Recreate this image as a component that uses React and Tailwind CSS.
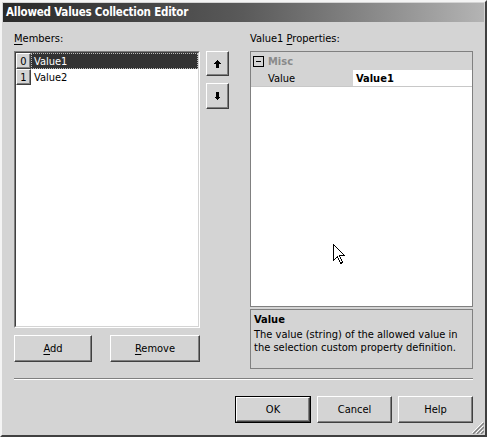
import React from "react"

const raised =
  "bg-[#d4d4d4] border border-t-white border-l-white border-r-[#404040] border-b-[#404040] shadow-[inset_-1px_-1px_0_#808080]"

function Btn({ children, className = "", def = false }) {
  if (def) {
    return (
      <div className={`border border-black ${className}`}>
        <div className={`${raised} w-full h-full flex items-center justify-center`}>{children}</div>
      </div>
    )
  }
  return <div className={`${raised} flex items-center justify-center ${className}`}>{children}</div>
}

function Arrow({ down = false }) {
  return (
    <svg width="7" height="8" viewBox="0 0 7 8" className={down ? "rotate-180" : ""}>
      <polygon points="3.5,0 7,3.5 5,3.5 5,8 2,8 2,3.5 0,3.5" fill="black" shapeRendering="crispEdges" />
    </svg>
  )
}

export default function App() {
  const font = "font-['DejaVu_Sans_Condensed','DejaVu_Sans',sans-serif] text-[11px] leading-[13px] text-black"
  return (
    <div className={`relative w-[487px] h-[437px] bg-[#d4d4d4] border-2 border-t-[#f4f4f4] border-l-[#f4f4f4] border-r-[#404040] border-b-[#404040] ${font}`}>
      {/* title bar */}
      <div className="mx-[1px] mt-[1px] h-[19px] bg-gradient-to-r from-[#2a2a2a] via-[#5a5a5a] to-[#b4b4b4] flex items-center pl-[3px]">
        <span className="text-white font-bold text-[11.5px] tracking-[-0.2px]">Allowed Values Collection Editor</span>
      </div>

      <div className="flex items-start pl-[12px]">
        {/* left column */}
        <div className="w-[186px]">
          <div className="h-[29px] pt-[10px]">
            <span className="underline underline-offset-2">M</span>embers:
          </div>
          <div className="h-[277px] bg-white border border-t-[#808080] border-l-[#808080] border-r-white border-b-white">
            <div className="h-full border border-t-[#404040] border-l-[#404040] border-r-[#d4d4d4] border-b-[#d4d4d4]">
              <div className="flex h-[16px]">
                <div className={`${raised} w-[15px] h-[16px] flex items-center justify-center`}>0</div>
                <div className="flex-1 bg-[#333333] text-white pl-[2px] flex items-center border border-dotted border-[#bbbbbb]">Value1</div>
              </div>
              <div className="flex h-[16px]">
                <div className={`${raised} w-[15px] h-[16px] flex items-center justify-center`}>1</div>
                <div className="flex-1 pl-[3px] flex items-center">Value2</div>
              </div>
            </div>
          </div>
          <div className="flex mt-[7px] gap-[18px]">
            <Btn className="w-[78px] h-[27px]">
              <span><span className="underline underline-offset-2">A</span>dd</span>
            </Btn>
            <Btn className="w-[90px] h-[27px]">
              <span><span className="underline underline-offset-2">R</span>emove</span>
            </Btn>
          </div>
        </div>

        {/* arrow buttons */}
        <div className="ml-[6px] w-[23px] pt-[29px] flex flex-col gap-[7px]">
          <Btn className="h-[25px]"><Arrow /></Btn>
          <Btn className="h-[26px]"><Arrow down /></Btn>
        </div>

        {/* right column */}
        <div className="ml-[21px] w-[223px]">
          <div className="h-[29px] pt-[10px]">
            Value1 <span className="underline underline-offset-2">P</span>roperties:
          </div>
          <div className="relative h-[256px] bg-white border border-[#808080]">
            <div className="h-[18px] bg-[#d4d4d4] flex items-center">
              <div className="ml-[2px] w-[11px] h-[11px] border border-black bg-[#d4d4d4] flex items-center justify-center">
                <div className="w-[5px] h-[1px] bg-black" />
              </div>
              <span className="ml-[4px] font-bold text-[#8a8a8a]">Misc</span>
            </div>
            <div className="flex h-[17px] border-b border-[#c8c8c8]">
              <div className="w-[102px] bg-[#d4d4d4] pl-[17px] flex items-center">Value</div>
              <div className="flex-1 pl-[3px] flex items-center font-bold">Value1</div>
            </div>
            {/* mouse pointer */}
            <svg className="absolute left-[82px] top-[192px]" width="12" height="21" viewBox="0 0 12 21">
              <path
                d="M0.5 0.5 L0.5 16.5 L4.5 12.5 L7.5 19.5 L9.5 18.5 L6.5 11.5 L11.5 11.5 Z"
                fill="white"
                stroke="black"
                strokeWidth="1"
                shapeRendering="crispEdges"
              />
            </svg>
          </div>
          <div className="mt-[2px] h-[60px] border border-[#808080] pl-[3px] pt-[2px]">
            <div className="font-bold leading-[15px]">Value</div>
            <div className="leading-[13px] mt-[1px]">
              The value (string) of the allowed value in the selection custom property definition.
            </div>
          </div>
        </div>
      </div>

      {/* separator */}
      <div className="ml-[12px] mt-[9px] w-[459px] h-[2px] border-t border-t-[#808080] border-b border-b-white" />

      {/* dialog buttons */}
      <div className="flex justify-end gap-[6px] pr-[12px] mt-[16px]">
        <Btn def className="w-[76px] h-[27px]">OK</Btn>
        <Btn className="w-[75px] h-[27px]">Cancel</Btn>
        <Btn className="w-[75px] h-[27px]">Help</Btn>
      </div>

      {/* size grip */}
      <svg className="absolute right-[1px] bottom-[1px]" width="13" height="13" viewBox="0 0 13 13">
        <path d="M12 1 L1 12 M12 5 L5 12 M12 9 L9 12" stroke="white" strokeWidth="1" />
        <path d="M13 2 L2 13 M13 6 L6 13 M13 10 L10 13" stroke="#808080" strokeWidth="1.4" />
      </svg>
    </div>
  )
}
